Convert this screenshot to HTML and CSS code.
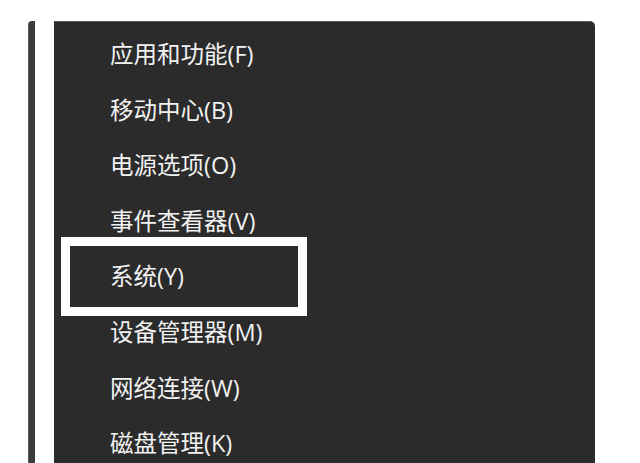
FILE: index.html
```html
<!DOCTYPE html>
<html lang="zh-CN">
<head>
<meta charset="utf-8">
<title>快捷菜单</title>
<link rel="stylesheet" href="styles.css">
</head>
<body>
<div class="stage">
  <div class="edge"></div>
  <div class="menu">
    <ul class="items">
      <li class="item">应用和功能(F)</li>
      <li class="item">移动中心(B)</li>
      <li class="item">电源选项(O)</li>
      <li class="item">事件查看器(V)</li>
      <li class="item">系统(Y)</li>
      <li class="item">设备管理器(M)</li>
      <li class="item">网络连接(W)</li>
      <li class="item">磁盘管理(K)</li>
    </ul>
  </div>
  <div class="highlight"></div>
</div>
</body>
</html>
```
FILE: styles.css
```css
html, body {
  margin: 0;
  padding: 0;
  background: #ffffff;
}
.stage {
  position: relative;
  display: flex;
  align-items: stretch;
  height: 463px;
  padding: 21px 0 0 28px;
  box-sizing: border-box;
  overflow: hidden;
}
.edge {
  width: 7px;
  background: #3c3c3c;
  border-left: 1px solid #555555;
  box-sizing: border-box;
  border-radius: 4px 0 0 0;
  margin-right: 19px;
}
.menu {
  width: 541px;
  background: #2b2b2b;
  border-top: 1px solid #5a5a5a;
  box-sizing: border-box;
  border-radius: 0 5px 0 0;
  padding: 5px 0 0 56px;
}
.items {
  list-style: none;
  margin: 0;
  padding: 0;
}
.item {
  height: 55.6px;
  display: flex;
  align-items: center;
  font-family: "Open Sans", "Noto Sans CJK SC", sans-serif;
  font-size: 23.5px;
  line-height: 1;
  color: #f2f2f2;
}
.highlight {
  position: absolute;
  left: 61px;
  top: 237px;
  width: 246px;
  height: 79px;
  border: 9px solid #ffffff;
  box-sizing: border-box;
}
```
